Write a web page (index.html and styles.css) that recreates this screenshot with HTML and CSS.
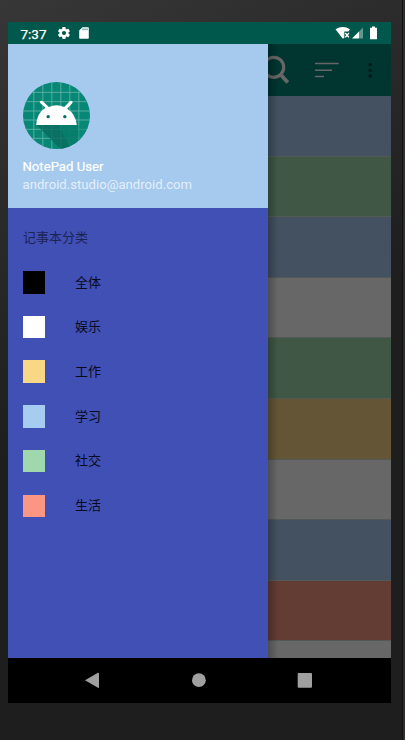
FILE: index.html
```html
<!DOCTYPE html>
<html lang="zh-CN">
<head>
<meta charset="utf-8">
<title>NotePad</title>
<link rel="stylesheet" href="styles.css">
</head>
<body>
<div class="screen">
  <header class="status">
    <span class="time">7:37</span>
    <svg class="gear" width="12" height="12" viewBox="2 2 20 20"><path fill="#fff" d="M19.4 13c0-.3.1-.6.1-1s0-.7-.1-1l2.1-1.6c.2-.2.3-.4.1-.7l-2-3.4c-.1-.2-.4-.3-.6-.2l-2.5 1c-.5-.4-1.100-.7-1.700-1l-.4-2.600c0-.3-.2-.5-.5-.5h-4c-.3 0-.5.2-.5.5L9 5.100c-.6.3-1.200.6-1.700 1l-2.500-1c-.2-.1-.5 0-.6.2l-2 3.400c-.1.3-.1.5.1.7L4.500 11c0 .3-.1.6-.1 1s0 .7.1 1l-2.200 1.600c-.2.2-.2.4-.1.7l2 3.400c.1.2.4.3.6.2l2.500-1c.5.4 1.100.7 1.700 1l.4 2.600c0 .3.2.5.5.5h4c.3 0 .5-.2.5-.5l.4-2.600c.6-.3 1.200-.6 1.700-1l2.500 1c.2.1.5 0 .6-.2l2-3.400c.1-.3.1-.5-.1-.7zM12 15.500a3.500 3.500 0 1 1 0-7 3.500 3.500 0 0 1 0 7z"/></svg>
    <svg class="card" width="10" height="12" viewBox="0 0 10 12"><path fill="#fff" d="M3.500.3H9q.8 0 .8.800v9.800q0 .8-.8.800H1q-.8 0-.8-.8V3.600z"/><path stroke="#00574b" stroke-width=".8" d="M4 1.500v1.700M6 1.500v1.700M8 1.500v1.700"/></svg>
    <svg class="signal" width="42" height="14" viewBox="335 25.500 42 14">
      <path fill="#fff" d="M335.500 28.800q7.200-4.400 14.500 0l-1.600 2.200h-4.100v6.200l-1.500 1z"/>
      <path stroke="#fff" stroke-width="1.400" d="M345.300 32.500l3.600 4.400m0-4.400l-3.600 4.400"/>
      <path fill="#fff" d="M352 38l7-7v7z"/><path fill="#5f9a91" d="M359 31l4-4v11h-4z"/>
      <path fill="#fff" d="M372 26h3v1.300h2V38.800h-7V27.300h2z"/>
    </svg>
  </header>
  <div class="main">
    <nav class="drawer">
      <div class="profile">
        <svg class="avatar" width="67" height="67" viewBox="22.500 21 201 201">
          <defs><clipPath id="disc"><circle cx="123" cy="121.500" r="100.500"/></clipPath></defs>
          <g clip-path="url(#disc)">
            <path fill="#078775" d="M20 20h205v205H20z"/>
            <path stroke="#65b5a8" stroke-width="2.500" d="M55 20v205M82 20v205M109 20v205M136 20v205M163 20v205M190 20v205M20 52h205M20 80h205M20 108h205M20 135h205M20 163h205M20 190h205"/>
            <path fill="#096b5f" fill-opacity=".8" d="M63 150l72 72h52v-72z"/>
            <path fill="#078775" fill-opacity=".55" d="M130 150h95v75h-60z"/>
          </g>
          <path fill="#fff" d="M62 150q2-36 28-52L74 84q-3-4 1-6t7 1l18 17q23-10 46 0l17-17q4-3 7 0t0 6l-15 16q25 15 29 49z"/>
          <circle cx="98" cy="125" r="5" fill="#096b5f"/><circle cx="148" cy="125" r="5" fill="#096b5f"/>
        </svg>
        <div class="name">NotePad User</div>
        <div class="mail">android.studio@android.com</div>
      </div>
      <h2 class="heading">记事本分类</h2>
      <ul class="menu">
        <li><i class="swatch black"></i><span>全体</span></li>
        <li><i class="swatch white"></i><span>娱乐</span></li>
        <li><i class="swatch yellow"></i><span>工作</span></li>
        <li><i class="swatch blue"></i><span>学习</span></li>
        <li><i class="swatch green"></i><span>社交</span></li>
        <li><i class="swatch red"></i><span>生活</span></li>
      </ul>
    </nav>
    <section class="content">
      <div class="toolbar">
        <svg width="123" height="52" viewBox="268 44 123 52">
          <g fill="none" stroke="#666"><circle cx="273.700" cy="67.300" r="10" stroke-width="3.200"/><path stroke-width="3.800" d="M280.800 74.800l7 7.800"/><path stroke-width="1.600" d="M315 63.500h23.800M315 70.300h17M315 76.500h9"/></g>
          <g fill="#001d19"><circle cx="370.200" cy="64.500" r="1.800"/><circle cx="370.200" cy="70.200" r="1.800"/><circle cx="370.200" cy="75.900" r="1.800"/></g>
        </svg>
      </div>
      <div class="notes">
        <div class="note n-blue"></div><div class="note n-green"></div><div class="note n-blue"></div>
        <div class="note n-white"></div><div class="note n-green"></div><div class="note n-yellow"></div>
        <div class="note n-white"></div><div class="note n-blue"></div><div class="note n-red"></div>
        <div class="note n-white"></div>
      </div>
    </section>
  </div>
  <footer class="navbar">
    <svg width="383" height="45" viewBox="8 658 383 45" fill="#a0a0a0"><path d="M85 680.300l13-7.500q1-.4 1 .5v14q0 .9-1 .5z"/><circle cx="198.900" cy="680.200" r="6.900"/><rect x="297.700" y="673" width="14.300" height="14.700" rx="1"/></svg>
  </footer>
</div>
</body>
</html>
```
FILE: styles.css
```css
* { box-sizing: border-box; }
body {
  margin: 0;
  height: 740px;
  padding: 22px 14px 37px 8px;
  overflow: hidden;
  background:
    linear-gradient(90deg, transparent 402px, #121212 402px, #121212 403px, #302e2e 403px),
    linear-gradient(155deg, #373737 0%, #2b2b2b 22%, #1e1e1e 50%, #1e1e1e 100%);
  font-family: Roboto, "Noto Sans CJK SC", sans-serif;
}
svg { display: block; flex: none; }
.screen { display: flex; flex-direction: column; width: 383px; height: 681px; }
.status {
  display: flex;
  align-items: center;
  height: 22px;
  padding: 0 14px 0 12.500px;
  background: #00574b;
  color: #fff;
}
.time {
  width: 37px;
  font-size: 13.500px;
  line-height: 22px;
  padding-top: 1px;
  -webkit-text-stroke: .25px #fff;
}
.card { margin-left: 9.500px; }
.signal { margin-left: auto; }
.main { display: flex; height: 614px; }
.drawer { width: 260px; background: #4050b5; }
.profile { height: 164px; padding: 38px 14.500px 0; background: #a6c9ee; color: #fff; }
.name {
  margin-top: 9px;
  font-size: 13.150px;
  line-height: 18px;
  -webkit-text-stroke: .2px #fff;
}
.mail { font-size: 13.150px; line-height: 18px; color: #e2eefa; white-space: nowrap; }
.heading {
  margin: 0;
  height: 52px;
  padding: 4px 15px 0;
  font-size: 13px;
  font-weight: 400;
  line-height: 52px;
  color: #1c2456;
}
.menu { margin: 0; padding: 0; list-style: none; }
.menu li {
  display: flex;
  align-items: center;
  height: 44.700px;
  padding-left: 14.500px;
  font-size: 13px;
  color: #080b20;
}
.menu span { padding-bottom: 2.500px; }
.swatch { width: 22.500px; height: 22.500px; margin-right: 30px; }
.black { background: #000; }
.white { background: #fff; }
.yellow { background: #f9d885; }
.blue { background: #a6ccf0; }
.green { background: #9fd8ad; }
.red { background: #fa9683; }
.content { position: relative; display: flex; flex-direction: column; width: 123px; }
.content::after {
  content: "";
  position: absolute;
  inset: 0 auto 0 0;
  width: 10px;
  background: linear-gradient(90deg, rgba(0, 0, 0, .25), transparent);
}
.toolbar { height: 52px; background: #003530; }
.notes { height: 562px; overflow: hidden; }
.note { height: 60.600px; border-bottom: 1px solid #535a55; }
.n-blue { background: #435160; }
.n-green { background: #405746; }
.n-white { background: #676767; }
.n-yellow { background: #645536; }
.n-red { background: #633c34; }
.navbar { height: 45px; background: #000; }
```
